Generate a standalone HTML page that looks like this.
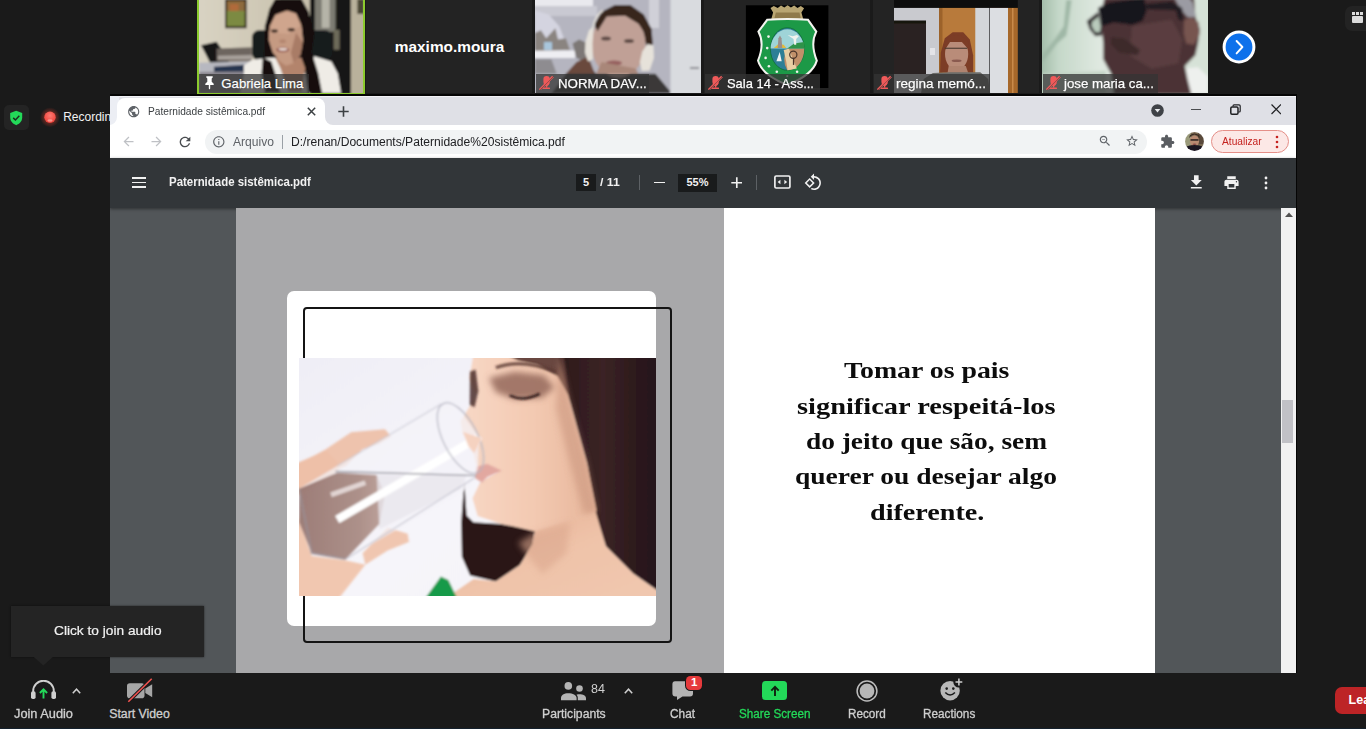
<!DOCTYPE html>
<html><head><meta charset="utf-8">
<style>
*{margin:0;padding:0;box-sizing:border-box}
html,body{width:1366px;height:729px;overflow:hidden;background:#1a1a1a;font-family:"Liberation Sans",sans-serif}
#root{position:relative;width:1366px;height:729px;overflow:hidden;background:#1a1a1a}
.a{position:absolute}
.t{position:absolute;white-space:nowrap;transform-origin:0 50%;line-height:1}
.tile{position:absolute;top:0;height:93px;width:166px;background:#232323;overflow:hidden}
.tile>svg.ph{position:absolute;left:0;top:0}
.nm{position:absolute;left:2px;top:73.5px;height:19.5px;background:rgba(52,52,52,.75)}
.nm .t{text-shadow:0 0 1px rgba(0,0,0,.6);-webkit-text-stroke:.25px #fff}
.nm svg{position:absolute;left:2.6px;top:1.9px}
#share{position:absolute;left:110px;top:96px;width:1185.6px;height:577px;background:#525659;overflow:hidden}
</style></head><body>
<div id="root">
<div class="tile" style="left:199px;width:164.3px;height:92.5px;outline:2px solid #8ccb2e;background:#cdc6b2;overflow:visible">
<svg class="ph" width="164.3" height="92.5" viewBox="0 0 166 93" preserveAspectRatio="none"><defs><filter id="b1" x="-5%" y="-5%" width="110%" height="110%"><feGaussianBlur stdDeviation="1.0"/></filter>
<linearGradient id="gw" x1="0" x2="1"><stop offset="0" stop-color="#d9d3c3"/><stop offset="0.6" stop-color="#c9c2ae"/><stop offset="1" stop-color="#bdb59f"/></linearGradient></defs>
<g filter="url(#b1)">
<rect x="-2" y="-2" width="170" height="97" fill="url(#gw)"/>
<rect x="26.3" y="-1" width="21.8" height="29.4" fill="#2a2318"/><rect x="28.2" y="1" width="18" height="12" fill="#8d6a3c"/><rect x="28.2" y="11" width="18" height="15.4" fill="#7c8a42"/><rect x="31" y="4" width="9" height="7" fill="#b06a3a"/>
<rect x="112" y="-2" width="42" height="97" fill="#191815"/>
<rect x="117" y="-2" width="21" height="34" fill="#7d7c72"/><rect x="124" y="-2" width="8" height="30" fill="#b5b4a8"/><rect x="136" y="30" width="6" height="20" fill="#6d6a5a"/>
<rect x="153.5" y="-2" width="14" height="97" fill="#b9b19b"/><rect x="160" y="-1" width="7" height="15" fill="#4a4535"/>
<polygon points="2.0,45.4 17.8,41.9 22.4,48.7 24.3,57.9 30.3,59.9 29.6,63.2 11.2,63.0 5.9,52.7" fill="#121416"/>
<polygon points="17.8,48.7 53.3,47.4 53.3,61.9 17.8,61.9" fill="#6d655f"/>
<polygon points="19.1,56.0 53.3,55.3 53.3,59.9 19.1,59.9" fill="#a9a29c"/>
<polygon points="-0.0,63.2 50.7,61.9 63.9,59.3 63.9,73.8 -0.0,73.8" fill="#b7b8c0"/>
<polygon points="15.1,67.2 45.4,65.2 45.4,73.1 15.1,73.8" fill="#27364f"/>
<polygon points="-0.0,72.4 48.0,71.8 48.0,93.5 -0.0,93.5" fill="#8b8790"/>
<rect x="53.5" y="30.5" width="81" height="30" rx="7" fill="#171b1d"/>
<polygon points="77.0,-1.3 71.1,9.2 67.1,26.3 65.8,57.9 63.2,73.8 66.5,93.5 124.4,93.5 120.5,73.8 113.9,52.7 116.5,32.9 109.9,10.5 103.4,-1.3" fill="#14100e"/>
<polygon points="45.4,74.4 45.4,65.9 53.3,60.3 66.5,58.6 77.0,57.9 90.2,73.8 106.0,73.8 116.5,56.6 133.7,61.9 140.2,73.8 143.5,93.5 41.5,93.5" fill="#efece6"/>
<polygon points="77.0,57.9 82.3,68.5 90.2,92.2 103.4,92.2 107.3,68.5 103.4,57.9" fill="#b3846c"/>
<polygon points="64.5,57.9 63.2,73.8 66.5,93.5 82.3,93.5 77.0,73.8 73.1,61.9" fill="#14100e"/>
<polygon points="109.9,50.0 113.9,52.7 120.5,73.8 124.4,93.5 109.9,93.5 107.3,73.8" fill="#14100e"/>
<polygon points="77.0,14.5 88.9,10.3 99.4,13.2 104.0,26.3 105.3,43.5 102.3,55.3 95.7,63.5 87.8,66.1 82.3,62.2 74.4,52.9 70.2,39.5 71.2,26.3" fill="#c59a82"/>
<polygon points="77.0,15.8 88.9,11.9 98.1,14.5 102.0,26.3 90.2,34.2 77.0,32.9 72.0,27.7" fill="#cfa58d"/>
<polygon points="98.1,32.9 105.3,43.5 102.3,55.3 95.7,63.5 92.8,52.7" fill="#a97c66"/>
<ellipse cx="76.3" cy="31.2" rx="3.4" ry="1.5" fill="#2c1c18"/><ellipse cx="93.2" cy="30" rx="3.6" ry="1.5" fill="#2c1c18"/>
<ellipse cx="84.5" cy="41.5" rx="3.4" ry="2" fill="#b48670"/>
<ellipse cx="84.6" cy="50" rx="6.4" ry="2.6" fill="#8e4f47"/><ellipse cx="84.8" cy="49.6" rx="4.6" ry="1.3" fill="#eadbd4"/>
<polygon points="95.5,7.9 109.9,10.5 116.5,32.9 113.9,52.7 109.9,56.6 103.4,52.7 105.3,39.5 103.4,25.0" fill="#14100e"/>
<polygon points="71.8,7.9 82.3,-1.3 103.4,-1.3 111.3,13.2 99.4,13.8 88.9,10.3 77.0,14.8 71.2,26.3 70.2,39.5 73.7,52.7 66.5,55.3 66.5,26.3" fill="#14100e"/>
</g></svg>
<div class="nm" style="left:0px;width:109.5px"><svg width="15" height="15" viewBox="0 0 15 15"><path fill="#fff" d="M4.3 1.2h6.4v1.3l-1 .9v3.3l2 2v1.2H8.2v3.6l-.7 1-.7-1V9.9H3.3V8.7l2-2V3.4l-1-.9z"/></svg><span class="t" style="left:22.30px;top:3.33px;font-size:13.2px;color:#fff;">Gabriela Lima</span></div>
</div>
<div class="tile" style="left:366px;background:#232323"><span class="t" style="left:28.80px;top:38.76px;font-size:15.4px;color:#fff;font-weight:bold;">maximo.moura</span></div>
<div class="tile" style="left:535px;background:#b7b7c2">
<svg class="ph" width="166" height="93" viewBox="0 0 166 93"><defs><filter id="b2" x="-5%" y="-5%" width="110%" height="110%"><feGaussianBlur stdDeviation="0.8"/></filter></defs>
<g filter="url(#b2)">
<rect x="-2" y="-2" width="170" height="97" fill="#b5b5c0"/>
<rect x="-2" y="-2" width="60" height="8" fill="#e9e9ee"/>
<rect x="-2" y="6" width="64" height="10" fill="#c9c9d2"/>
<polygon points="-0.0,10.5 13.8,14.5 24.3,26.3 30.9,43.5 30.9,50.7 -0.0,50.7" fill="#d4d4e0"/>
<rect x="-2" y="50.5" width="42" height="7.5" fill="#eeeef2"/>
<polygon points="-0.0,32.9 5.9,30.3 11.2,38.2 20.4,28.3 23.0,39.5 30.9,38.2 34.9,50.0 -0.0,50.7" fill="#8a8480"/>
<rect x="9" y="42" width="8" height="8" fill="#a9c6dc"/>
<polygon points="-0.0,59.3 16.4,59.3 21.7,73.8 -0.0,73.8" fill="#8e8c90"/>
<rect x="135.5" y="-2" width="32" height="97" fill="#d9dbdf"/>
<rect x="114" y="-2" width="10" height="30" fill="#d0d0d8"/>
<rect x="155" y="67" width="9" height="2" fill="#8a8a90"/>
<polygon points="37.5,43.5 44.1,39.5 53.3,43.5 50.7,61.9 41.5,57.9" fill="#7d7876"/>
<polygon points="16.4,93.5 30.9,73.8 50.7,61.9 61.2,73.8 103.4,73.8 120.5,73.8 135.0,90.9 135.0,93.5" fill="#3b3938"/>
<polygon points="30.9,73.8 41.5,61.9 53.3,56.6 59.9,73.8" fill="#6a4a3c"/>
<polygon points="59.9,23.7 66.5,11.9 79.7,5.3 95.5,5.3 108.6,14.5 116.5,29.0 117.8,43.5 113.9,52.7 107.3,32.9 90.2,19.8 71.8,21.1 59.9,38.2" fill="#38271f"/>
<ellipse cx="83.5" cy="44.5" rx="27" ry="33" fill="#c0a096"/>
<polygon points="59.9,23.7 66.5,11.9 79.7,5.3 95.5,5.3 108.6,14.5 116.5,29.0 113.9,39.5 103.4,23.7 90.2,15.8 71.8,16.5 62.5,31.6" fill="#38271f"/>
<ellipse cx="71" cy="38.5" rx="5" ry="2" fill="#5d4a44"/><ellipse cx="94" cy="41" rx="5" ry="2" fill="#5d4a44"/>
<ellipse cx="79" cy="63" rx="8" ry="2.4" fill="#96605f"/>
<polygon points="50.4,42.1 54.0,30.3 58.8,26.3 57.5,43.5 57.9,59.3 53.1,61.6 50.0,52.7" fill="#e6e2da"/>
<polygon points="107.3,51.4 112.6,44.1 118.5,45.4 118.9,57.9 114.6,70.5 106.7,71.1 104.9,61.9" fill="#e6e2da"/>
<path d="M57.9 28.3 Q59.9 15.8 67.8 10.5" stroke="#e6e2da" stroke-width="1.6" fill="none"/>
<polygon points="61.2,73.8 66.5,61.9 100.7,68.5 103.4,73.8" fill="#a98779"/>
</g></svg>
<div class="nm" style="left:1px;width:113px"><svg width="15" height="15" viewBox="0 0 15 15"><g fill="#f05a5a"><rect x="4.4" y="0.9" width="6.4" height="9" rx="3.2"/><path d="M4.6 8.500 Q7.600 13.800 10.600 8.500Z"/><rect x="6.900" y="10" width="1.400" height="2.600"/><rect x="4" y="12.400" width="7" height="1.600" rx=".5"/></g><path d="M1.300 14.300 L14 1.600" stroke="#3a3a3a" stroke-width="1.200"/><path d="M0.300 14.500 L13.600 1.200" stroke="#f05a5a" stroke-width="1.300"/><path d="M2 14.700 L14.600 2.100" stroke="#f05a5a" stroke-width="0.900"/></svg><span class="t" style="left:22.00px;top:3.33px;font-size:13.2px;color:#fff;transform:scaleX(1.0099);">NORMA DAV...</span></div>
</div>
<div class="tile" style="left:704px;background:#232323">
<svg class="ph" width="166" height="93" viewBox="0 0 166 93"><defs><filter id="b3"><feGaussianBlur stdDeviation="0.35"/></filter></defs>
<rect x="41.9" y="5.3" width="82.5" height="82.7" fill="#000"/>
<g filter="url(#b3)">
<polygon points="66.5,7.9 69.8,5.9 73.7,7.9 77.0,5.5 80.3,7.6 83.6,5.3 86.9,7.6 90.2,5.5 93.5,7.9 96.8,5.9 100.1,8.2 97.4,12.5 99.4,19.8 67.1,19.8 69.1,12.5" fill="#b9a673"/>
<polygon points="71.8,12.5 95.5,12.5 96.8,18.4 70.4,18.4" fill="#8f7a4c"/>
<path d="M63.2 19.8 Q83.3 18.2 104.0 19.8 L112.3 31.6 Q106.0 43.5 112.8 60.6 Q108.6 75.1 83.3 84.9 Q57.9 75.1 54.0 60.6 Q61.0 43.5 54.4 31.6 Z" fill="#1d9947" stroke="#f4f4f0" stroke-width="2"/>
<ellipse cx="83.3" cy="49.0" rx="16.9" ry="21.3" fill="#2e7f96" stroke="#0f6d34" stroke-width="0.8"/>
<path d="M66.5 48.5 A16.9 20.8 0 0 1 100.2 48.5 Z" fill="#9fd4d8"/>
<path d="M83.3 48.5 L100.2 48.5 A16.9 21.3 0 0 1 83.3 70.3 Q77.0 59.3 83.3 48.5 Z" fill="#c1906a"/>
<polygon points="79.7,50.0 84.9,48.7 90.2,61.9 92.8,68.5 83.6,70.3 82.3,61.9" fill="#e8cfa4"/>
<polygon points="83.3,48.5 90.2,43.5 100.2,42.1 100.2,48.5" fill="#2f9348"/>
<polygon points="69.8,48.1 74.4,44.1 79.7,44.8 82.3,48.1" fill="#e3b93a"/>
<polygon points="73.7,48.1 74.4,38.2 76.0,35.6 77.5,38.2 78.3,48.1" fill="#9a8f8c"/>
<polygon points="83.6,34.9 88.9,36.2 92.8,34.9 94.8,36.2 92.2,38.9 92.2,44.8 90.2,44.8 89.5,38.9" fill="#f2f2ee"/>
<polygon points="72.4,61.2 75.7,52.0 77.7,61.2" fill="#f4f4f4"/>
<circle cx="89.3" cy="54.7" r="3.6" fill="none" stroke="#4a342a" stroke-width="1.2"/><rect x="88.9" y="57.9" width="1.3" height="7" fill="#4a342a"/>
<g fill="#f2f2ee"><circle cx="64.5" cy="36.6" r="1.3"/><circle cx="63.2" cy="48.1" r="1.3"/><circle cx="61.6" cy="57.9" r="1.3"/><circle cx="64.9" cy="66.2" r="1.3"/><circle cx="72.8" cy="71.8" r="1.3"/><circle cx="93.1" cy="71.8" r="1.3"/><circle cx="83.3" cy="76.1" r="1.1"/></g>
</g></svg>
<div class="nm" style="left:1px;width:115px"><svg width="15" height="15" viewBox="0 0 15 15"><g fill="#f05a5a"><rect x="4.4" y="0.9" width="6.4" height="9" rx="3.2"/><path d="M4.6 8.500 Q7.600 13.800 10.600 8.500Z"/><rect x="6.900" y="10" width="1.400" height="2.600"/><rect x="4" y="12.400" width="7" height="1.600" rx=".5"/></g><path d="M1.300 14.300 L14 1.600" stroke="#3a3a3a" stroke-width="1.200"/><path d="M0.300 14.500 L13.600 1.200" stroke="#f05a5a" stroke-width="1.300"/><path d="M2 14.700 L14.600 2.100" stroke="#f05a5a" stroke-width="0.900"/></svg><span class="t" style="left:22.00px;top:3.33px;font-size:13.2px;color:#fff;transform:scaleX(0.9800);">Sala 14 - Ass...</span></div>
</div>
<div class="tile" style="left:873px;background:#232323">
<svg class="ph" width="166" height="93" viewBox="0 0 166 93"><defs><filter id="b4" x="-5%" y="-5%" width="110%" height="110%"><feGaussianBlur stdDeviation="0.6"/></filter><clipPath id="c4"><rect x="21" y="0" width="123.8" height="93"/></clipPath></defs>
<g clip-path="url(#c4)"><g filter="url(#b4)">
<rect x="15" y="-2" width="135" height="97" fill="#c9cacf"/>
<rect x="21" y="21" width="32" height="53" fill="#2a2221"/><rect x="21" y="20.5" width="32" height="3" fill="#161211"/>
<rect x="66" y="7" width="36.5" height="68" fill="#b87a3b"/><rect x="66" y="7" width="3.5" height="68" fill="#9c6229"/>
<rect x="102.5" y="7" width="33" height="88" fill="#d3d5d9"/><rect x="116" y="7" width="1.2" height="88" fill="#5d5d60"/>
<rect x="117" y="7" width="18" height="88" fill="#dcdee2"/>
<rect x="135" y="7" width="10" height="88" fill="#a7682c"/><rect x="139" y="7" width="1.5" height="88" fill="#c98a4a"/>
<rect x="57" y="48" width="5" height="7" fill="#e4e4e8"/>
<polygon points="67.1,72.4 67.8,52.7 71.8,38.2 79.7,32.3 90.2,32.3 96.8,39.5 100.1,55.3 100.1,72.4" fill="#7c3c26"/>
<ellipse cx="83.6" cy="54.0" rx="11.6" ry="15.8" fill="#b98c79"/>
<polygon points="71.8,43.5 75.7,36.2 87.6,34.9 95.5,42.1 96.1,50.0 88.9,42.1 77.0,42.1 71.8,50.0" fill="#7c3c26"/>
<rect x="71.8" y="47.7" width="22.4" height="1.1" fill="#4a3a30"/>
<ellipse cx="83.6" cy="60.8" rx="5" ry="1.2" fill="#8a5a50"/>
<polygon points="75.7,65.9 92.8,65.9 95.5,73.8 74.4,73.8" fill="#b08470"/>
<polygon points="48.0,93.5 50.7,79.0 59.9,73.1 77.0,72.2 107.3,72.2 115.2,79.0 117.2,93.5" fill="#6d6d6a"/>
<rect x="15" y="-2" width="135" height="9.9" fill="#0c0a0a"/>
</g></g></svg>
<div class="nm" style="left:1px;width:116px"><svg width="15" height="15" viewBox="0 0 15 15"><g fill="#f05a5a"><rect x="4.4" y="0.9" width="6.4" height="9" rx="3.2"/><path d="M4.6 8.500 Q7.600 13.800 10.600 8.500Z"/><rect x="6.900" y="10" width="1.400" height="2.600"/><rect x="4" y="12.400" width="7" height="1.600" rx=".5"/></g><path d="M1.300 14.300 L14 1.600" stroke="#3a3a3a" stroke-width="1.200"/><path d="M0.300 14.500 L13.600 1.200" stroke="#f05a5a" stroke-width="1.300"/><path d="M2 14.700 L14.600 2.100" stroke="#f05a5a" stroke-width="0.900"/></svg><span class="t" style="left:22.00px;top:3.33px;font-size:13.2px;color:#fff;transform:scaleX(1.0245);">regina memó...</span></div>
</div>
<div class="tile" style="left:1042px;background:#d5e2d6">
<svg class="ph" width="166" height="93" viewBox="0 0 166 93"><defs><filter id="b5" x="-5%" y="-5%" width="110%" height="110%"><feGaussianBlur stdDeviation="1.6"/></filter>
<linearGradient id="gj" x1="0" x2="1"><stop offset="0" stop-color="#9db8a4"/><stop offset="0.12" stop-color="#c5d8c9"/><stop offset="0.35" stop-color="#dfe8e0"/><stop offset="1" stop-color="#d5e1d6"/></linearGradient></defs>
<g filter="url(#b5)">
<rect x="-4" y="-4" width="174" height="101" fill="url(#gj)"/>
<polygon points="-0.0,63.2 15.1,43.5 24.3,35.6 26.3,23.7 29.6,0.0 24.3,0.0 21.7,26.3 12.5,39.5 -0.0,55.3" fill="#9fb7a6"/>
<polygon points="-0.0,73.8 63.9,71.1 63.9,93.5 -0.0,93.5" fill="#c3d3c5"/>
<polygon points="144.2,68.5 156.0,67.2 165.9,76.4 165.9,93.5 148.1,93.5" fill="#eef0ee"/>
<polygon points="62.5,-2.6 58.6,15.8 61.2,43.5 61.2,59.3 69.1,73.8 71.8,94.8 149.5,94.8 145.5,79.0 142.9,65.9 153.4,55.3 156.0,43.5 158.0,29.0 153.4,17.1 152.1,-2.6" fill="#4c3335"/>
<polygon points="90.2,26.3 129.7,19.8 140.2,39.5 136.3,63.2 109.9,68.5 87.6,55.3" fill="#5a3e40"/>
<polygon points="132.3,-2.6 137.6,7.9 145.5,17.1 154.1,17.1 150.8,2.6 146.8,-2.6" fill="#9b9ba3"/>
<polygon points="142.2,19.8 149.5,17.1 156.7,22.4 157.6,34.2 152.1,44.8 144.2,43.5 141.6,32.9" fill="#77544f"/>
<polygon points="55.9,7.9 66.5,2.6 102.0,-2.6 104.7,10.5 100.7,21.1 90.2,25.0 71.8,22.4 59.9,26.3" fill="#19131a"/>
<polygon points="44.8,21.1 55.9,11.9 59.9,26.3 59.9,35.6 53.3,36.2 47.4,29.0" fill="#2a2226" />
<polygon points="50.0,21.7 56.6,16.5 58.8,26.3 57.9,32.3 53.3,32.3 49.6,26.3" fill="#b9cbbc"/>
<polygon points="103.4,4.0 129.7,1.3 140.2,7.9 141.6,21.1 136.3,19.8 133.7,10.5 104.7,9.2" fill="#231a20"/>
<polygon points="69.1,36.9 82.3,38.2 98.1,50.0 95.5,55.3 77.0,52.7 69.1,44.8" fill="#3d2a2c"/>
</g></svg>
<div class="nm" style="left:1px;width:115px"><svg width="15" height="15" viewBox="0 0 15 15"><g fill="#f05a5a"><rect x="4.4" y="0.9" width="6.4" height="9" rx="3.2"/><path d="M4.6 8.500 Q7.600 13.800 10.600 8.500Z"/><rect x="6.900" y="10" width="1.400" height="2.600"/><rect x="4" y="12.400" width="7" height="1.600" rx=".5"/></g><path d="M1.300 14.300 L14 1.600" stroke="#3a3a3a" stroke-width="1.200"/><path d="M0.300 14.500 L13.600 1.200" stroke="#f05a5a" stroke-width="1.300"/><path d="M2 14.700 L14.600 2.100" stroke="#f05a5a" stroke-width="0.900"/></svg><span class="t" style="left:21.10px;top:3.33px;font-size:13.2px;color:#fff;transform:scaleX(1.0056);">jose maria ca...</span></div>
</div>
<svg class="a" style="left:1221.7px;top:29.7px" width="34" height="34" viewBox="0 0 34 34"><circle cx="17" cy="17" r="14.9" fill="#0e71eb" stroke="#fff" stroke-width="3"/><path d="M14.6 11 L20.4 17 L14.6 23.4" fill="none" stroke="#fff" stroke-width="1.9" stroke-linecap="round" stroke-linejoin="round"/></svg>
<div class="a" style="left:1345px;top:5.5px;width:30px;height:25.5px;background:#232323;border-radius:7px"></div>
<div class="a" style="left:1351.7px;top:15.6px;width:11.4px;height:7px;background:#dcdcdc;border-radius:1px"></div>
<div class="a" style="left:1351.9px;top:12.3px;width:2.9px;height:2.6px;background:#dcdcdc"></div>
<div class="a" style="left:1356.0px;top:12.3px;width:2.9px;height:2.6px;background:#dcdcdc"></div>
<div class="a" style="left:1360.1px;top:12.3px;width:2.9px;height:2.6px;background:#dcdcdc"></div>
<div class="a" style="left:110px;top:94.4px;width:1186px;height:1.7px;background:#050505"></div>
<div class="a" style="left:1295.5px;top:94.4px;width:1.1px;height:578.6px;background:#050505"></div>
<div class="a" style="left:4px;top:105px;width:25px;height:24.5px;background:#242424;border-radius:5px"></div>
<svg class="a" style="left:9.3px;top:109.6px" width="14.4" height="16.100" viewBox="0 0 17 19"><path d="M8.5 1 L15.6 3.4 V9 C15.6 13.5 12.3 16.6 8.5 18 C4.7 16.6 1.4 13.5 1.4 9 V3.4 Z" fill="#23d959"/><path d="M5 9.3 L7.6 11.9 L12.2 6.9" fill="none" stroke="#1c2a20" stroke-width="1.7"/></svg>
<svg class="a" style="left:38px;top:105px" width="24" height="24" viewBox="0 0 24 24"><defs><radialGradient id="rg" cx="0.5" cy="0.5" r="0.5"><stop offset="0.45" stop-color="#c0392b" stop-opacity=".55"/><stop offset="1" stop-color="#c0392b" stop-opacity="0"/></radialGradient><radialGradient id="rg2" cx="0.5" cy="0.35" r="0.6"><stop offset="0" stop-color="#ff7a72"/><stop offset="1" stop-color="#f0443c"/></radialGradient></defs><circle cx="12" cy="12.3" r="10" fill="url(#rg)"/><circle cx="12" cy="12.3" r="5.7" fill="url(#rg2)"/><ellipse cx="12" cy="15.5" rx="2.6" ry="1.3" fill="#ffb0a8" opacity=".7"/></svg>
<span class="t" style="left:63.20px;top:110.64px;font-size:12px;color:#f2f2f2;">Recording</span>
<div id="share">
<div class="a" style="left:0;top:0;width:1186px;height:29px;background:#dfe0e6;border-top:1.3px solid #f2f2f6"></div>
<div class="a" style="left:0;top:0;width:9px;height:29px;background:#eceef4"></div>
<div class="a" style="left:7px;top:1.5px;width:208px;height:28px;background:#fff;border-radius:8px 8px 0 0"></div>
<svg class="a" style="left:-1px;top:21px" width="8" height="8"><path d="M8 0 V8 H0 A8 8 0 0 0 8 0Z" fill="#fff"/></svg>
<svg class="a" style="left:215px;top:21px" width="8" height="8"><path d="M0 0 V8 H8 A8 8 0 0 1 0 0Z" fill="#fff"/></svg>
<svg class="a" style="left:17px;top:8.700000000000003px" width="13.4" height="13.4" viewBox="0 0 24 24"><path fill="#5f6368" d="M12 2C6.48 2 2 6.48 2 12s4.48 10 10 10 10-4.48 10-10S17.52 2 12 2zm-1 17.93c-3.95-.49-7-3.85-7-7.93 0-.62.08-1.21.21-1.79L9 15v1c0 1.1.9 2 2 2v1.930zm6.900-2.540c-.260-.810-1-1.390-1.900-1.390h-1v-3c0-.55-.45-1-1-1H8v-2h2c.55 0 1-.45 1-1V7h2c1.100 0 2-.9 2-2v-.41c2.930 1.190 5 4.060 5 7.410 0 2.080-.8 3.970-2.100 5.390z"/></svg>
<span class="t" style="left:38.40px;top:9.57px;font-size:11.5px;color:#3c4043;transform:scaleX(0.8842);">Paternidade sistêmica.pdf</span>
<svg class="a" style="left:196.5px;top:11px" width="9" height="9" viewBox="0 0 9 9"><path d="M0.8 0.8 L8.2 8.2 M8.2 0.8 L0.8 8.2" stroke="#3c4043" stroke-width="1.5"/></svg>
<svg class="a" style="left:228.39999999999998px;top:9.5px" width="11" height="11" viewBox="0 0 11 11"><path d="M5.5 0.3 V10.7 M0.3 5.5 H10.7" stroke="#3c4043" stroke-width="1.6"/></svg>
<svg class="a" style="left:1041px;top:8px" width="13" height="13" viewBox="0 0 13 13"><circle cx="6.5" cy="6.5" r="6.3" fill="#3f4247"/><path d="M3.7 5 H9.3 L6.5 8.6Z" fill="#e8eaed"/></svg>
<div class="a" style="left:1081px;top:12.799999999999997px;width:9.5px;height:1.2px;background:#4a4c50"></div>
<svg class="a" style="left:1120px;top:7.5px" width="11" height="11" viewBox="0 0 11 11"><rect x="0.8" y="3" width="7.2" height="7.2" rx="1.2" fill="none" stroke="#202124" stroke-width="1.5"/><path d="M3 2.6 V1.9 Q3 0.8 4.100 0.8 H9 Q10.200 0.8 10.200 2 V7 Q10.200 8 9.200 8 H8.400" fill="none" stroke="#202124" stroke-width="1.2"/></svg>
<svg class="a" style="left:1160.5px;top:8px" width="10.5" height="10.5" viewBox="0 0 10 10"><path d="M0.500 0.500 L9.500 9.500 M9.500 0.500 L0.500 9.500" stroke="#202124" stroke-width="1.15"/></svg>
<div class="a" style="left:0;top:29px;width:1186px;height:33px;background:#fff"></div>
<div class="a" style="left:94.5px;top:33.5px;width:942.5px;height:24px;background:#f1f3f4;border-radius:12px"></div>
<svg class="a" style="left:11.200000000000003px;top:38.19999999999999px" width="15" height="15" viewBox="0 0 24 24"><path fill="#bfc1c5" d="M20 11H7.830l5.590-5.590L12 4l-8 8 8 8 1.410-1.410L7.830 13H20v-2z"/></svg>
<svg class="a" style="left:39.099999999999994px;top:38.19999999999999px" width="15" height="15" viewBox="0 0 24 24"><path fill="#bfc1c5" d="M12 4l-1.410 1.410L16.170 11H4v2h12.170l-5.580 5.590L12 20l8-8z"/></svg>
<svg class="a" style="left:67px;top:37.5px" width="16" height="16" viewBox="0 0 24 24"><path fill="#4a4d51" d="M17.650 6.350C16.200 4.900 14.210 4 12 4c-4.420 0-7.990 3.580-7.990 8s3.570 8 7.990 8c3.730 0 6.840-2.550 7.730-6h-2.080c-.82 2.330-3.040 4-5.650 4-3.310 0-6-2.690-6-6s2.690-6 6-6c1.660 0 3.140.69 4.220 1.780L13 11h7V4l-2.350 2.350z"/></svg>
<svg class="a" style="left:102.4px;top:38.69999999999999px" width="13.600" height="13.600" viewBox="0 0 24 24"><path fill="#5f6368" d="M11 7h2v2h-2zm0 4h2v6h-2zm1-9C6.480 2 2 6.480 2 12s4.480 10 10 10 10-4.480 10-10S17.520 2 12 2zm0 18c-4.410 0-8-3.590-8-8s3.590-8 8-8 8 3.590 8 8-3.590 8-8 8z"/></svg>
<span class="t" style="left:123.40px;top:39.59px;font-size:12.3px;color:#5f6368;transform:scaleX(0.9831);">Arquivo</span>
<div class="a" style="left:172px;top:38.5px;width:1px;height:14px;background:#9aa0a6"></div>
<span class="t" style="left:180.50px;top:39.59px;font-size:12.3px;color:#202124;transform:scaleX(0.9822);">D:/renan/Documents/Paternidade%20sistêmica.pdf</span>
<svg class="a" style="left:987.5px;top:38.30000000000001px" width="14" height="14" viewBox="0 0 24 24"><path fill="#5f6368" d="M15.500 14h-.79l-.28-.27C15.410 12.590 16 11.110 16 9.500 16 5.910 13.090 3 9.500 3S3 5.910 3 9.500 5.910 16 9.500 16c1.610 0 3.090-.59 4.230-1.570l.27.28v.79l5 4.990L20.490 19l-4.990-5zm-6 0C7.010 14 5 11.990 5 9.500S7.010 5 9.500 5 14 7.010 14 9.500 11.990 14 9.500 14zM7 9h5v1H7z"/></svg>
<svg class="a" style="left:1015.3px;top:37.80000000000001px" width="14" height="14" viewBox="0 0 24 24"><path fill="#5f6368" d="M22 9.240l-7.190-.62L12 2 9.190 8.630 2 9.240l5.460 4.730L5.820 21 12 17.270 18.180 21l-1.630-7.030L22 9.240zM12 15.400l-3.760 2.270 1-4.280-3.320-2.880 4.380-.38L12 6.100l1.710 4.040 4.380.38-3.320 2.880 1 4.280L12 15.400z"/></svg>
<svg class="a" style="left:1049.5px;top:38px" width="15" height="15" viewBox="0 0 24 24"><path fill="#5a5d61" d="M20.500 11H19V7c0-1.100-.9-2-2-2h-4V3.500C13 2.120 11.880 1 10.500 1S8 2.120 8 3.500V5H4c-1.100 0-1.990.9-1.990 2v3.800H3.500c1.490 0 2.700 1.210 2.700 2.700s-1.210 2.700-2.700 2.700H2V20c0 1.100.9 2 2 2h3.800v-1.500c0-1.490 1.210-2.700 2.700-2.700 1.490 0 2.700 1.210 2.700 2.700V22H17c1.100 0 2-.9 2-2v-4h1.500c1.380 0 2.500-1.120 2.500-2.500S21.880 11 20.500 11z"/></svg>
<svg class="a" style="left:1075.2px;top:35.599999999999994px" width="19" height="19" viewBox="0 0 19 19"><defs><clipPath id="av"><circle cx="9.500" cy="9.500" r="9.400"/></clipPath><filter id="bav"><feGaussianBlur stdDeviation="0.6"/></filter></defs><g clip-path="url(#av)"><g filter="url(#bav)"><rect width="19" height="19" fill="#7a6a52"/><rect x="0" y="0" width="6" height="19" fill="#9a9a7a"/><rect x="13" y="0" width="6" height="12" fill="#5a4a3a"/><ellipse cx="9.500" cy="9" rx="4.600" ry="5.600" fill="#b98a72"/><path d="M4 6 Q9.500 -1 15 6 L14 3 Q9.500 0 5 3Z" fill="#3a2a22"/><rect x="5.500" y="7.200" width="8" height="1.500" fill="#2a2220"/><path d="M0 19 V15 Q9.500 11 19 15 V19Z" fill="#1a1420"/><ellipse cx="9.500" cy="12.300" rx="2" ry="0.700" fill="#8a4a48"/></g></g></svg>
<div class="a" style="left:1101px;top:33.5px;width:77.500px;height:23.500px;background:#fce8e6;border:1px solid #e58f88;border-radius:12px"></div>
<span class="t" style="left:1112.00px;top:39.93px;font-size:11.3px;color:#c5221f;transform:scaleX(0.9030);">Atualizar</span>
<svg class="a" style="left:1165px;top:38.5px" width="4" height="14" viewBox="0 0 4 14"><g fill="#c5221f"><circle cx="2" cy="2" r="1.300"/><circle cx="2" cy="7" r="1.300"/><circle cx="2" cy="12" r="1.300"/></g></svg>
<div class="a" style="left:0;top:61.5px;width:1186px;height:50px;background:#323639;box-shadow:0 1px 3px rgba(0,0,0,.45)"></div>
<div class="a" style="left:22px;top:81.1px;width:14.200px;height:1.800px;background:#f1f1f1"></div>
<div class="a" style="left:22px;top:85.69999999999999px;width:14.200px;height:1.800px;background:#f1f1f1"></div>
<div class="a" style="left:22px;top:90.29999999999998px;width:14.200px;height:1.800px;background:#f1f1f1"></div>
<span class="t" style="left:58.90px;top:80.27px;font-size:12.2px;color:#f1f1f1;font-weight:bold;transform:scaleX(0.9392);">Paternidade sistêmica.pdf</span>
<div class="a" style="left:465.79999999999995px;top:77.6px;width:20.400px;height:17.500px;background:#191b1c"></div>
<span class="t" style="left:473.00px;top:80.99px;font-size:11px;color:#f1f1f1;font-weight:bold;">5</span>
<span class="t" style="left:490.00px;top:80.99px;font-size:11px;color:#f1f1f1;font-weight:bold;transform:scaleX(1.1104);">/ 11</span>
<div class="a" style="left:529px;top:79px;width:1px;height:15px;background:#5d6165"></div>
<div class="a" style="left:544px;top:85.5px;width:11px;height:1.700px;background:#f1f1f1"></div>
<div class="a" style="left:568.2px;top:77.6px;width:39.100px;height:18px;background:#191b1c"></div>
<span class="t" style="left:576.50px;top:80.99px;font-size:11px;color:#f1f1f1;font-weight:bold;">55%</span>
<svg class="a" style="left:620.6px;top:80.6px" width="11.600" height="11.600" viewBox="0 0 12 12"><path d="M6 0.300 V11.700 M0.300 6 H11.700" stroke="#f1f1f1" stroke-width="1.700"/></svg>
<div class="a" style="left:645.7px;top:79px;width:1px;height:15px;background:#5d6165"></div>
<svg class="a" style="left:664px;top:79.30000000000001px" width="16.800" height="14" viewBox="0 0 17 14"><rect x="0.900" y="0.900" width="15.200" height="12.200" rx="1.300" fill="none" stroke="#f1f1f1" stroke-width="1.700"/><path d="M3.700 7 L6.500 4.600 V9.400Z M13.300 7 L10.500 4.600 V9.400Z" fill="#f1f1f1"/></svg>
<svg class="a" style="left:694.3px;top:76.80000000000001px" width="18.5" height="18.5" viewBox="0 0 24 24"><path fill="#f1f1f1" d="M7.34 6.41L.86 12.9l6.49 6.48 6.49-6.48-6.5-6.49zM3.69 12.9l3.66-3.66L11 12.9l-3.66 3.66-3.65-3.66zm15.67-6.26C17.61 4.88 15.3 4 13 4V.76L8.76 5 13 9.24V6c1.79 0 3.58.68 4.95 2.05 2.73 2.73 2.73 7.17 0 9.9C16.58 19.32 14.79 20 13 20c-.97 0-1.94-.21-2.84-.61l-1.49 1.49C10.02 21.62 11.51 22 13 22c2.3 0 4.61-.88 6.36-2.64 3.52-3.51 3.52-9.21 0-12.720z"/></svg>
<svg class="a" style="left:1077.3px;top:76.69999999999999px" width="18.600" height="18.600" viewBox="0 0 24 24"><path fill="#f1f1f1" d="M19 9h-4V3H9v6H5l7 7 7-7zM5 18v2h14v-2H5z"/></svg>
<svg class="a" style="left:1112.7px;top:77.5px" width="17" height="17" viewBox="0 0 24 24"><path fill="#f1f1f1" d="M19 8H5c-1.660 0-3 1.340-3 3v6h4v4h12v-4h4v-6c0-1.660-1.340-3-3-3zm-3 11H8v-5h8v5zm3-7c-.55 0-1-.45-1-1s.45-1 1-1 1 .45 1 1-.45 1-1 1zm-1-9H6v4h12V3z"/></svg>
<svg class="a" style="left:1154px;top:79.5px" width="4" height="14" viewBox="0 0 4 14"><g fill="#f1f1f1"><circle cx="2" cy="2" r="1.400"/><circle cx="2" cy="7" r="1.400"/><circle cx="2" cy="12" r="1.400"/></g></svg>
<div class="a" style="left:125.5px;top:111.5px;width:488.1px;height:470px;background:#a8a8aa"></div>
<div class="a" style="left:613.6px;top:111.5px;width:431.4px;height:470px;background:#fff"></div>
<div class="a" style="left:1171px;top:111.5px;width:15px;height:470px;background:#f1f1f1"></div>
<svg class="a" style="left:1174.5px;top:115.5px" width="8" height="5" viewBox="0 0 8 5"><path d="M0 5 L4 0.500 L8 5Z" fill="#505050"/></svg>
<div class="a" style="left:1172.2px;top:304px;width:11.1px;height:43.4px;background:#c1c1c6"></div>
<div class="a" style="left:177px;top:195px;width:369.4px;height:335.4px;background:#fff;border-radius:7px"></div>
<div class="a" style="left:193px;top:211.2px;width:369px;height:336.3px;border:2.1px solid #141414;border-radius:4px"></div>
<svg class="a" style="left:189.1px;top:261.5px" width="357.3" height="238.2" viewBox="12 22 1040 693" preserveAspectRatio="none">
<defs><filter id="bp" x="-3%" y="-3%" width="106%" height="106%"><feGaussianBlur stdDeviation="3.2"/></filter>
<filter id="bp2" x="-10%" y="-10%" width="120%" height="120%"><feGaussianBlur stdDeviation="9"/></filter>
<linearGradient id="gbg" x1="0" y1="0" x2="1" y2="1"><stop offset="0" stop-color="#efeef6"/><stop offset="0.5" stop-color="#f6f5fa"/><stop offset="1" stop-color="#f4f3f7"/></linearGradient>
<linearGradient id="gwater" x1="0" x2="1"><stop offset="0" stop-color="#93706a"/><stop offset="0.7" stop-color="#a5867e"/><stop offset="1" stop-color="#b89a92"/></linearGradient>
<linearGradient id="ghair" x1="0" x2="1"><stop offset="0" stop-color="#2b181a"/><stop offset="0.45" stop-color="#3b2325"/><stop offset="0.75" stop-color="#2d1a1d"/><stop offset="1" stop-color="#24141a"/></linearGradient>
<linearGradient id="gface" x1="0" x2="1"><stop offset="0" stop-color="#f8d8c6"/><stop offset="0.55" stop-color="#f3c9b1"/><stop offset="1" stop-color="#e6b59a"/></linearGradient>
<linearGradient id="gneck" x1="0" y1="0" x2="1" y2="1"><stop offset="0" stop-color="#e2ac91"/><stop offset="0.5" stop-color="#efc3a9"/><stop offset="1" stop-color="#f1c8b0"/></linearGradient>
</defs>
<rect x="12" y="22" width="1040" height="693" fill="#f4f3f8"/>
<g filter="url(#bp)">
<rect x="0" y="10" width="1064" height="717" fill="url(#gbg)"/>
<polygon points="770,10 1064,10 1064,705 985,650 905,570 872,470 850,330 800,150 760,60" fill="url(#ghair)"/>
<polygon points="493,380 500,480 520,500 600,505 700,520 692,565 655,625 585,672 510,655 486,600 484,500" fill="#2a1719"/>
<polygon points="430,727 520,665 585,672 655,625 692,565 700,525 875,468 905,570 985,650 1064,705 1064,727" fill="url(#gneck)"/>
<polygon points="520,10 765,10 800,150 850,330 878,468 700,527 600,504 532,482 517,430 540,382 592,352 530,345 520,300 545,255 487,236 482,205 528,132 508,80" fill="url(#gface)"/>
<polygon points="610,10 781,10 800,140 765,75 705,42 650,30" fill="#5a3833" opacity=".9"/>
<polygon points="375,727 425,658 447,668 475,727" fill="#159a48"/>
</g>
<g filter="url(#bp2)">
<polygon points="650,560 700,530 800,500 790,590 720,650" fill="#dba78d" opacity=".6"/>
<polygon points="770,20 800,150 850,330 878,468 840,475 800,330 760,170" fill="#c9937b" opacity=".55"/>
<polygon points="565,80 640,62 725,72 755,108 720,138 640,142 585,122" fill="#9a6e60" opacity=".9"/>
</g>
<g filter="url(#bp)">
<path d="M585 50 Q660 22 760 62" stroke="#5a3a32" stroke-width="9" fill="none" opacity=".85"/>
<polygon points="510,62 526,56 534,118 523,165 509,158" fill="#4a2e2c" opacity=".85"/>
<path d="M625 131 Q665 150 712 126" stroke="#2a1a1a" stroke-width="7" fill="none"/>
<polygon points="528,338 560,330 602,350 560,368 545,385 525,372" fill="#e2a8a0"/>
<polygon points="16,328 90,287 164,238 262,229 280,250 246,271 197,287 148,336 16,386" fill="#eec3ad"/>
<polygon points="0,330 90,292 135,340 60,402 0,425" fill="#eec0a8"/>
<polygon points="197,590 270,516 328,533 332,557 270,582 205,623" fill="#f0c6b0"/>
<polygon points="0,459 49,598 148,611 205,623 123,727 0,727" fill="#f1c7b0"/>
<polygon points="12,402 123,336 426,156 470,158 535,250 533,344 505,400 148,607 49,590 12,500" fill="#f4f3f8" opacity=".72"/>
<polygon points="12,402 123,356 238,362 262,420 246,505 148,607 49,590 12,500" fill="url(#gwater)" opacity=".9"/>
<polygon points="238,362 500,364 482,402 246,520" fill="#e9e6ec" opacity=".8"/>
<path d="M123 492 L533 254" stroke="#ffffff" stroke-width="24"/>
<path d="M105 420 L205 385" stroke="#efe6e6" stroke-width="14" opacity=".8"/>
<path d="M118 352 L528 364" stroke="#8a8a94" stroke-width="4" opacity=".85"/>
<ellipse cx="482" cy="255" rx="50" ry="112" transform="rotate(-27 482 255)" fill="none" stroke="#b6b6c2" stroke-width="4" opacity=".9"/>
<path d="M123 336 L426 156" stroke="#c8c8d2" stroke-width="4" opacity=".7"/>
<path d="M148 607 L525 369" stroke="#c0c0cc" stroke-width="4" opacity=".7"/>
<path d="M12 402 L49 590 L148 607" stroke="#9a8e94" stroke-width="7" fill="none" opacity=".7"/>
<polygon points="488,236 545,255 522,300 506,280" fill="#f5d2c0"/>
</g></svg>
<span class="t" style="left:733.60px;top:262.30px;font-size:24px;color:#0c0c0c;font-weight:bold;font-family:'Liberation Serif',serif;transform:scaleX(1.1590);">Tomar os pais</span>
<span class="t" style="left:687.00px;top:297.90px;font-size:24px;color:#0c0c0c;font-weight:bold;font-family:'Liberation Serif',serif;transform:scaleX(1.1839);">significar respeitá-los</span>
<span class="t" style="left:696.00px;top:333.00px;font-size:24px;color:#0c0c0c;font-weight:bold;font-family:'Liberation Serif',serif;transform:scaleX(1.1404);">do jeito que são, sem</span>
<span class="t" style="left:685.00px;top:367.90px;font-size:24px;color:#0c0c0c;font-weight:bold;font-family:'Liberation Serif',serif;transform:scaleX(1.1458);">querer ou desejar algo</span>
<span class="t" style="left:760.00px;top:403.50px;font-size:24px;color:#0c0c0c;font-weight:bold;font-family:'Liberation Serif',serif;transform:scaleX(1.1720);">diferente.</span>
</div>
<div class="a" style="left:11px;top:606px;width:193px;height:51.3px;background:#242424;box-shadow:0 0 2px rgba(0,0,0,.6)"></div>
<svg class="a" style="left:33px;top:657px" width="21" height="9" viewBox="0 0 21 9"><path d="M0.800 0 L10.300 8.600 L19.800 0Z" fill="#242424"/></svg>
<span class="t" style="left:53.80px;top:624.29px;font-size:13.6px;color:#f2f2f2;transform:scaleX(1.0095);-webkit-text-stroke:.2px #f2f2f2;">Click to join audio</span>
<svg class="a" style="left:30px;top:680px" width="27" height="20" viewBox="0 0 27 20"><path d="M3.200 13.500 V11 A10.300 10.300 0 0 1 23.800 11 V13.500" fill="none" stroke="#cfcfcf" stroke-width="1.900"/><rect x="1" y="11.200" width="4.600" height="7.800" rx="1.800" fill="#cfcfcf"/><rect x="21.400" y="11.200" width="4.600" height="7.800" rx="1.800" fill="#cfcfcf"/><path d="M13.500 18.600 V9.800 M9.900 13 L13.500 9.300 L17.100 13" fill="none" stroke="#23d959" stroke-width="1.900"/></svg>
<svg class="a" style="left:72px;top:687.500px" width="9" height="6" viewBox="0 0 9 6"><path d="M0.800 5.200 L4.500 1.200 L8.200 5.200" fill="none" stroke="#cfcfcf" stroke-width="1.500"/></svg>
<span class="t" style="left:13.60px;top:708.39px;font-size:12.3px;color:#cfcfcf;transform:scaleX(1.0394);-webkit-text-stroke:.3px #cfcfcf;">Join Audio</span>
<svg class="a" style="left:125px;top:677px" width="30" height="26" viewBox="0 0 30 26"><rect x="2" y="6.200" width="17.500" height="15" rx="2.800" fill="#a6a6a6"/><path d="M20.300 11.500 L27.200 7.300 V20.200 L20.300 16Z" fill="#a6a6a6"/><path d="M3.300 24.700 L26.700 1.800" stroke="#1a1a1a" stroke-width="3.600"/><path d="M3.300 24.700 L26.700 1.800" stroke="#f0524f" stroke-width="1.600"/></svg>
<span class="t" style="left:109.20px;top:708.39px;font-size:12.3px;color:#cfcfcf;-webkit-text-stroke:.3px #cfcfcf;">Start Video</span>
<svg class="a" style="left:560px;top:681px" width="27" height="20" viewBox="0 0 27 20"><g fill="#b4b4b4"><circle cx="8.3" cy="4.900" r="3.800"/><path d="M1 19.300 V17 C1 14 4 12.200 8.300 12.200 C12.600 12.200 16.600 14 16.600 17 V19.300Z"/><circle cx="19.500" cy="7.500" r="3.300"/><path d="M17.800 19.300 V16.800 C17.800 15.500 17.300 14.500 16.500 13.700 C17.400 13.400 18.400 13.300 19.500 13.300 C23 13.300 26 14.600 26 17.200 V19.300Z"/></g></svg>
<span class="t" style="left:590.70px;top:682.00px;font-size:13px;color:#cfcfcf;transform:scaleX(0.9612);">84</span>
<svg class="a" style="left:623.800px;top:688.400px" width="9" height="6" viewBox="0 0 9 6"><path d="M0.800 5.200 L4.500 1.200 L8.200 5.200" fill="none" stroke="#cfcfcf" stroke-width="1.500"/></svg>
<span class="t" style="left:542.00px;top:708.29px;font-size:12.3px;color:#cfcfcf;transform:scaleX(0.9912);-webkit-text-stroke:.3px #cfcfcf;">Participants</span>
<svg class="a" style="left:671px;top:680px" width="24" height="22" viewBox="0 0 24 22"><path d="M4 1.200 H19 Q22 1.200 22 4.200 V13.400 Q22 16.400 19 16.400 H11.500 L6 20 V16.400 H4.400 Q1.400 16.400 1.400 13.400 V4.200 Q1.400 1.200 4 1.200Z" fill="#b4b4b4"/></svg>
<div class="a" style="left:685.300px;top:674.800px;width:17.600px;height:15.800px;background:#1a1a1a;border-radius:5.500px"></div>
<div class="a" style="left:686.400px;top:675.900px;width:15.400px;height:13.700px;background:#e63a3c;border-radius:4.500px"></div>
<span class="t" style="left:691.00px;top:677.27px;font-size:11.5px;color:#fff;font-weight:bold;">1</span>
<span class="t" style="left:670.00px;top:708.29px;font-size:12.3px;color:#cfcfcf;transform:scaleX(0.9622);-webkit-text-stroke:.3px #cfcfcf;">Chat</span>
<div class="a" style="left:762px;top:681px;width:25px;height:18.900px;background:#23d959;border-radius:3.500px"></div>
<svg class="a" style="left:768.500px;top:684.600px" width="12" height="12" viewBox="0 0 12 12"><path d="M6 11 V2.200 M2.300 5.600 L6 1.800 L9.700 5.600" fill="none" stroke="#10200f" stroke-width="1.900"/></svg>
<span class="t" style="left:738.50px;top:708.29px;font-size:12.3px;color:#23d959;transform:scaleX(0.9493);-webkit-text-stroke:.3px #23d959;">Share Screen</span>
<svg class="a" style="left:855.800px;top:679.700px" width="22" height="22" viewBox="0 0 22 22"><circle cx="11" cy="11" r="9.900" fill="none" stroke="#bdbdbd" stroke-width="1.500"/><circle cx="11" cy="11" r="7.400" fill="#b6b6b6"/></svg>
<span class="t" style="left:847.50px;top:708.29px;font-size:12.3px;color:#cfcfcf;transform:scaleX(0.9533);-webkit-text-stroke:.3px #cfcfcf;">Record</span>
<svg class="a" style="left:938.500px;top:677px" width="26" height="25" viewBox="0 0 26 25"><circle cx="11.100" cy="13.700" r="9.700" fill="#b8b8b8"/><circle cx="19.900" cy="5" r="5.600" fill="#1a1a1a"/><path d="M19.900 1.600 V8.400 M16.500 5 H23.300" stroke="#cfcfcf" stroke-width="1.500"/><circle cx="7.700" cy="11.600" r="1.300" fill="#1a1a1a"/><circle cx="14.300" cy="11.600" r="1.300" fill="#1a1a1a"/><path d="M6.300 15.500 Q11.100 20.500 15.900 15.500" fill="none" stroke="#1a1a1a" stroke-width="1.600"/></svg>
<span class="t" style="left:923.20px;top:708.29px;font-size:12.3px;color:#cfcfcf;transform:scaleX(0.9562);-webkit-text-stroke:.3px #cfcfcf;">Reactions</span>
<div class="a" style="left:1335px;top:686.700px;width:40px;height:27.800px;background:#bd2426;border-radius:7px"></div>
<span class="t" style="left:1348.60px;top:693.52px;font-size:12.5px;color:#fff;font-weight:bold;">Leave</span>
<div class="a" style="left:0;top:727.500px;width:1366px;height:1.500px;background:#14202c"></div>
</div>
</body></html>
